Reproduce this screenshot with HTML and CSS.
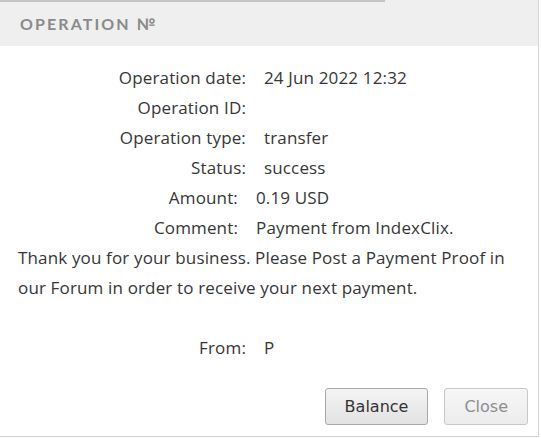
FILE: index.html
```html
<!DOCTYPE html>
<html>
<head>
<meta charset="utf-8">
<link rel="stylesheet" href="styles.css">
</head>
<body>
<div class="dialog">
  <div class="header">OPERATION №</div>
  <div class="content">
    <div class="row"><span class="label">Operation date:</span><span class="value">24 Jun 2022 12:32</span></div>
    <div class="row"><span class="label">Operation ID:</span><span class="value"></span></div>
    <div class="row"><span class="label">Operation type:</span><span class="value">transfer</span></div>
    <div class="row"><span class="label">Status:</span><span class="value">success</span></div>
    <div class="row shift"><span class="label">Amount:</span><span class="value">0.19 USD</span></div>
    <div class="row shift"><span class="label">Comment:</span><span class="value">Payment from IndexClix.</span></div>
    <p class="note">Thank you for your business. Please Post a Payment Proof in our Forum in order to receive your next payment.</p>
    <div class="row from"><span class="label">From:</span><span class="value">P</span></div>
  </div>
  <div class="actions">
    <button class="btn">Balance</button>
    <button class="btn disabled">Close</button>
  </div>
</div>
</body>
</html>
```
FILE: styles.css
```css
html, body {
  margin: 0;
  padding: 0;
  background: #fff;
}
.dialog {
  width: 538px;
  height: 436px;
  border-right: 1px solid #d4d4d4;
  border-bottom: 1px solid #cfcfcf;
  display: flex;
  flex-direction: column;
  font-family: "Open Sans", "DejaVu Sans", sans-serif;
  color: #363636;
  font-size: 17px;
  letter-spacing: 0.15px;
}
.header {
  height: 46px;
  box-sizing: border-box;
  padding-left: 20px;
  display: flex;
  align-items: center;
  background: linear-gradient(#c4c4c4, #c4c4c4) no-repeat 0 0 / 385px 2px, #efefef;
  color: #8a8a8a;
  font-family: Lato, "Open Sans", sans-serif;
  font-weight: 700;
  font-size: 16px;
  letter-spacing: 2.1px;
}
.content {
  padding: 17px 18px 0 18px;
  flex: 1;
}
.row {
  display: grid;
  grid-template-columns: 228px 1fr;
  column-gap: 18px;
  height: 30px;
  line-height: 30px;
}
.row.shift {
  grid-template-columns: 220px 1fr;
}
.label {
  text-align: right;
}
.note {
  margin: 0 0 30px 0;
  line-height: 30px;
}
.actions {
  display: flex;
  justify-content: flex-end;
  gap: 16px;
  padding: 0 10px 11px 0;
}
.btn {
  height: 37px;
  margin: 0;
  padding: 0 19px;
  border: 1px solid #a8a8a8;
  border-radius: 3px;
  background: linear-gradient(#f4f4f4, #e2e2e2);
  font-family: "DejaVu Sans", sans-serif;
  font-size: 16px;
  color: #333;
}
.btn.disabled {
  border-color: #c8c8c8;
  color: #8e8e8e;
  background: linear-gradient(#f6f6f6, #ececec);
}
```
